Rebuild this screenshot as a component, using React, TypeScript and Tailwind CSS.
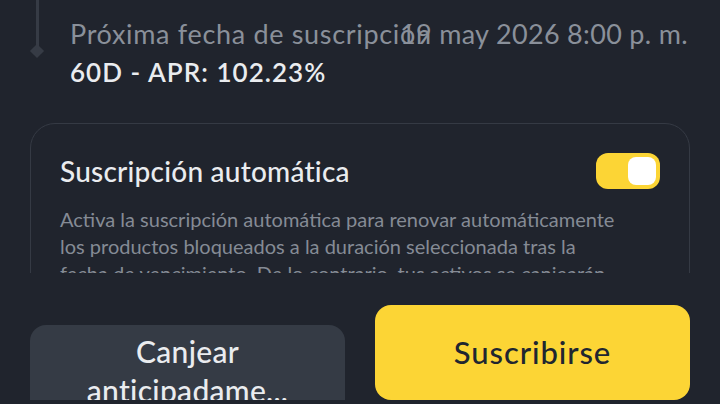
export default function App() {
  return (
    <div
      className="w-[720px] h-[404px] bg-[#20242d] overflow-hidden flex flex-col"
      style={{ fontFamily: "Lato, 'Noto Sans', sans-serif" }}
    >
      <div className="h-[273px] shrink-0 overflow-hidden">
        {/* timeline row */}
        <div className="flex">
          <div className="w-[16px] ml-[29px] flex flex-col items-center">
            <div className="w-[3px] h-[47px] bg-[#363b45]" />
            <div className="w-[10px] h-[10px] rotate-45 bg-[#363b45] -mt-[1px]" />
          </div>
          <div className="ml-[25px] mr-[32px] flex-1 min-w-0 pt-[14px]">
            <div className="flex text-[27px] leading-[39px] tracking-[0.025em] text-[#8a909a]">
              <span className="whitespace-nowrap min-w-0 shrink">Próxima fecha de suscripción</span>
              <span className="whitespace-nowrap ml-auto shrink-0 tracking-[0.012em]">19 may 2026 8:00 p. m.</span>
            </div>
            <div className="text-[26px] leading-[39px] font-semibold tracking-[0.04em] text-[#eaecef]">
              60D - APR: 102.23%
            </div>
          </div>
        </div>

        {/* auto subscribe card */}
        <div className="mx-[30px] mt-[31px] border-[1.5px] border-[#353a44] rounded-[25px] pl-[29px] pr-[29px] pt-[29px] pb-[30px]">
          <div className="flex items-center justify-between">
            <div className="text-[28px] leading-[32px] font-medium tracking-[0.008em] text-[#eaecef]">
              Suscripción automática
            </div>
            <div className="w-[64px] h-[36px] rounded-[12px] bg-[#fcd535] flex items-center justify-end pr-[4px]">
              <div className="w-[28px] h-[28px] rounded-[8px] bg-white" />
            </div>
          </div>
          <p className="mt-[17px] text-[20px] leading-[27px] text-[#858b95]">
            <span className="block whitespace-nowrap">Activa la suscripción automática para renovar automáticamente</span>
            <span className="block whitespace-nowrap">los productos bloqueados a la duración seleccionada tras la</span>
            <span className="block whitespace-nowrap">fecha de vencimiento. De lo contrario, tus activos se canjearán</span>
            <span className="block whitespace-nowrap">automáticamente en tu billetera.</span>
          </p>
        </div>
      </div>

      {/* bottom buttons */}
      <div className="h-[127px] shrink-0 overflow-hidden flex gap-[30px] px-[30px] pt-[32px]">
        <div className="flex-1 mt-[20px] h-[120px] shrink-0 rounded-[16px] bg-[#353b45] text-[#eaecef] text-[30px] leading-[39px] font-medium tracking-[0.01em] text-center pt-[7px]">
          <span className="block">Canjear</span>
          <span className="block">anticipadame...</span>
        </div>
        <div className="flex-1 h-[95px] rounded-[16px] bg-[#fcd535] text-[#202630] text-[31px] font-medium tracking-[0.03em] flex items-center justify-center">
          Suscribirse
        </div>
      </div>
    </div>
  );
}
